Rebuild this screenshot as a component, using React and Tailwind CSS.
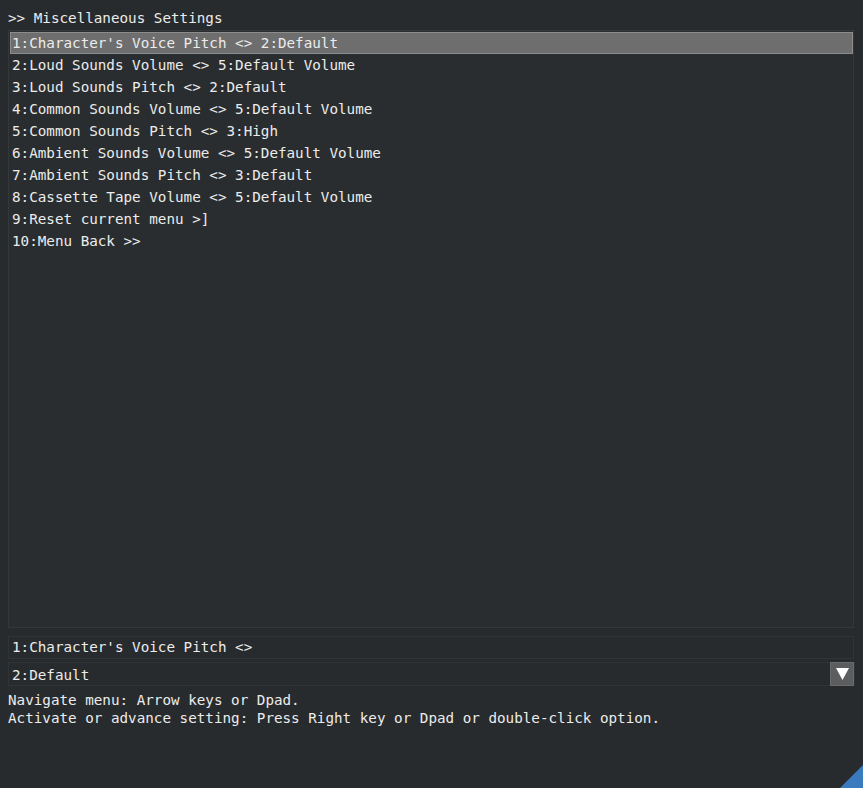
export default function App() {
  const rows = [
    "1:Character's Voice Pitch <> 2:Default",
    "2:Loud Sounds Volume <> 5:Default Volume",
    "3:Loud Sounds Pitch <> 2:Default",
    "4:Common Sounds Volume <> 5:Default Volume",
    "5:Common Sounds Pitch <> 3:High",
    "6:Ambient Sounds Volume <> 5:Default Volume",
    "7:Ambient Sounds Pitch <> 3:Default",
    "8:Cassette Tape Volume <> 5:Default Volume",
    "9:Reset current menu >]",
    "10:Menu Back >>",
  ];
  return (
    <div
      className="relative w-[863px] h-[788px] overflow-hidden bg-[#282b2d] text-[#ececec] text-[14.25px] leading-[22px] whitespace-pre"
      style={{ fontFamily: '"DejaVu Sans Mono", monospace' }}
    >
      <div className="px-2 pt-[7px] h-[30px]">{">> Miscellaneous Settings"}</div>
      <div className="mx-2 w-[846px] h-[598px] border border-[#34383a] bg-[#2a2d2f] pt-px pl-px">
        {rows.map((r, i) => (
          <div
            key={i}
            className={
              i === 0
                ? "h-[22px] w-[843px] pl-px bg-[#6e6e6e] border border-[#8c8c8c] leading-[20px]"
                : "h-[22px] pl-[2px]"
            }
          >
            {r}
          </div>
        ))}
      </div>
      <div className="mx-2 mt-[8px] w-[846px] h-[23px] border border-[#313436] pl-[3px] leading-[21px]">
        {"1:Character's Voice Pitch <>"}
      </div>
      <div className="mx-2 mt-[3px] w-[847px] h-[24px] flex items-center justify-between border border-[#313436]">
        <span className="pl-[3px] pt-[2px]">2:Default</span>
        <div className="w-[24px] h-[24px] bg-[#5c5d5e] border border-[#6a6b6c] flex items-center justify-center">
          <svg width="13" height="12" viewBox="0 0 13 12">
            <polygon points="0,0 13,0 6.5,12" fill="#ffffff" />
          </svg>
        </div>
      </div>
      <div className="px-2 mt-[5px] leading-[18px]">
        <div>Navigate menu: Arrow keys or Dpad.</div>
        <div>Activate or advance setting: Press Right key or Dpad or double-click option.</div>
      </div>
      <svg className="absolute right-0 bottom-0" width="23" height="23" viewBox="0 0 23 23">
        <polygon points="23,0 23,23 0,23" fill="#3a7bbd" />
      </svg>
    </div>
  );
}
